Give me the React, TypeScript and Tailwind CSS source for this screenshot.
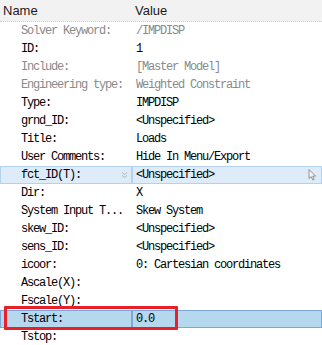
import React from 'react';

type Row = { name: string; value: string; dim?: boolean; state?: 'hover' | 'selected' };

const rows: Row[] = [
    { name: 'Solver Keyword:', value: '/IMPDISP', dim: true },
    { name: 'ID:', value: '1' },
    { name: 'Include:', value: '[Master Model]', dim: true },
    { name: 'Engineering type:', value: 'Weighted Constraint', dim: true },
    { name: 'Type:', value: 'IMPDISP' },
    { name: 'grnd_ID:', value: '<Unspecified>' },
    { name: 'Title:', value: 'Loads' },
    { name: 'User Comments:', value: 'Hide In Menu/Export' },
    { name: 'fct_ID(T):', value: '<Unspecified>', state: 'hover' },
    { name: 'Dir:', value: 'X' },
    { name: 'System Input T...', value: 'Skew System' },
    { name: 'skew_ID:', value: '<Unspecified>' },
    { name: 'sens_ID:', value: '<Unspecified>' },
    { name: 'icoor:', value: '0: Cartesian coordinates' },
    { name: 'Ascale(X):', value: '' },
    { name: 'Fscale(Y):', value: '' },
    { name: 'Tstart:', value: '0.0', state: 'selected' },
    { name: 'Tstop:', value: '' },
];

const mono = { fontFamily: '"Liberation Mono", "DejaVu Sans Mono", monospace' };

const DoubleChevron = () => (
    <svg width="7" height="8" viewBox="0 0 7 8" className="shrink-0">
        <path d="M1 1.5 L3.5 3.5 L6 1.5 M1 4.5 L3.5 6.5 L6 4.5" fill="none" stroke="#b4b4b4" strokeWidth="1" />
    </svg>
);

const Pointer = () => (
    <svg width="9" height="12" viewBox="0 0 9 12" className="shrink-0">
        <path d="M1 0.5 L1 9.5 L3.2 7.6 L4.8 11 L6.2 10.4 L4.7 7.1 L7.6 7.1 Z" fill="#f4f4f4" stroke="#8a8a8a" strokeWidth="0.9" />
    </svg>
);

const PropertyRow = ({ row }: { row: Row }) => {
    const text = row.dim ? 'text-[#8a8a8a]' : 'text-black';
    let nameCell = 'border border-transparent';
    let valueCell = 'border border-transparent';
    if (row.state === 'hover') {
        nameCell = 'border border-[#b3d2f1] bg-[#deecf9]';
        valueCell = 'border border-[#b3d2f1] bg-[#deecf9]';
    }
    if (row.state === 'selected') {
        nameCell = 'border border-[#7ea6d8] bg-[#b5d8ee]';
        valueCell = 'border border-[#7ea6d8] bg-[#b5d8ee]';
    }

    return (
        <div className="relative flex h-[18px] text-[12px] leading-[16px] tracking-[-1.2px]" style={mono}>
            <div className={`flex w-[132px] shrink-0 items-center pl-[20px] pr-[3px] ${nameCell} ${text}`}>
                <span className="flex-1 whitespace-nowrap">{row.name}</span>
                {row.state === 'hover' && <DoubleChevron />}
            </div>
            <div className={`flex flex-1 items-center pl-[3px] pr-[4px] ${valueCell} ${text}`}>
                <span className="flex-1 whitespace-nowrap">{row.value}</span>
                {row.state === 'hover' && <Pointer />}
            </div>
            {row.state === 'selected' && (
                <div className="absolute left-[4px] top-[-4px] h-[24px] w-[174px] border-[3px] border-[#e8202a] rounded-[1px]" />
            )}
        </div>
    );
};

const App = () => {
    return (
        <div className="w-[322px] h-[345px] overflow-hidden bg-white">
            <div
                className="flex h-[22px] items-center border-b border-dotted border-[#cfcfcf] bg-[#f2f2f2] text-[13px] text-[#1a1a1a]"
                style={{ fontFamily: '"Liberation Sans", Arial, sans-serif' }}
            >
                <div className="w-[132px] pl-[3px]">Name</div>
                <div className="pl-[3px]">Value</div>
            </div>
            {rows.map((row) => (
                <PropertyRow key={row.name} row={row} />
            ))}
        </div>
    );
};

export default App;
